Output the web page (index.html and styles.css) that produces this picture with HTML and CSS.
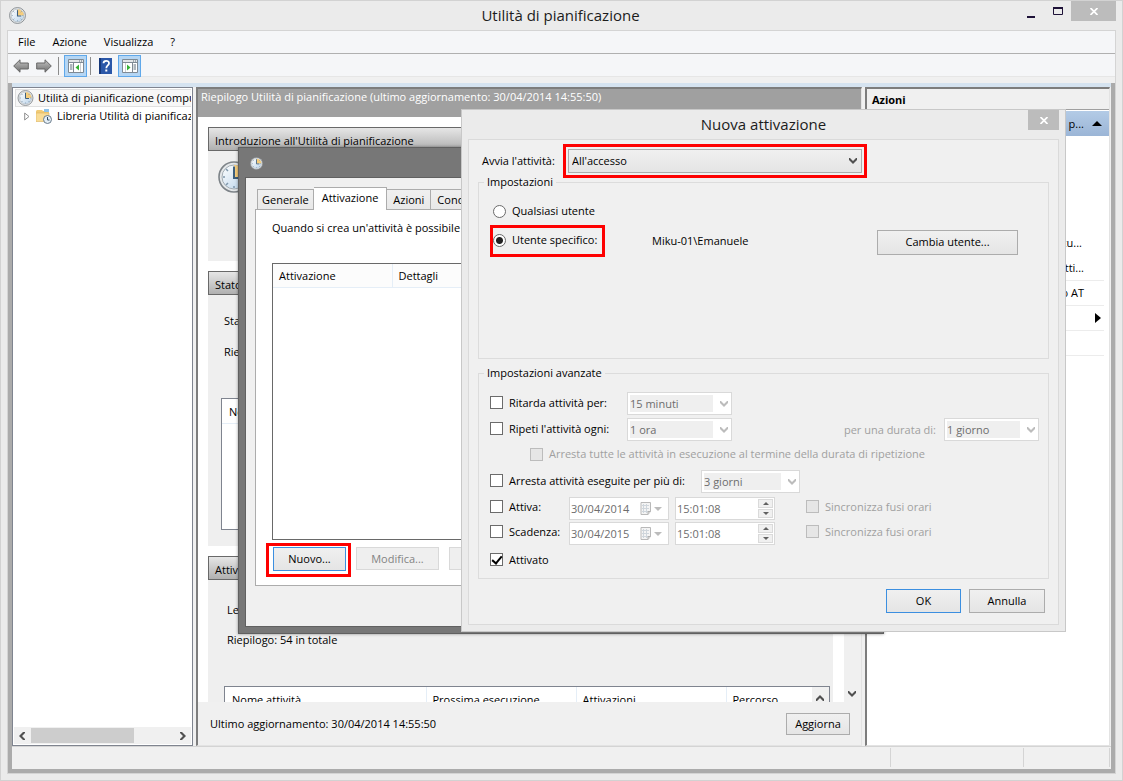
FILE: index.html
```html
<!DOCTYPE html>
<html lang="it">
<head>
<meta charset="utf-8">
<title>Utilità di pianificazione</title>
<link rel="stylesheet" href="styles.css">
</head>
<body>
<svg class="defs" aria-hidden="true">
  <defs>
    <linearGradient id="face" x1="0" y1="0" x2="1" y2="1"><stop offset="0" stop-color="#ffffff"/><stop offset="1" stop-color="#b9d3ea"/></linearGradient>
    <linearGradient id="arrow" x1="0" y1="0" x2="0" y2="1"><stop offset="0" stop-color="#c4c4c4"/><stop offset="1" stop-color="#6e6e6e"/></linearGradient>
    <symbol id="clock" viewBox="0 0 32 32">
      <circle cx="16" cy="16" r="15" fill="#e4e7e9" stroke="#7d8388" stroke-width="1.600"/>
      <circle cx="16" cy="16" r="12" fill="url(#face)" stroke="#a4adb4" stroke-width="1"/>
      <path d="M16 16V4a12 12 0 0 1 12 12z" fill="#f6cd7c"/>
      <path d="M16 5v2M16 25v2M5 16h2M25 16h2M8 8l2 2M8 24l2-2M24 24l-2-2M24 8l-2 2" stroke="#7f97ab" stroke-width="1.5"/>
      <path d="M16 6v11h7" fill="none" stroke="#3d5f7d" stroke-width="2"/>
    </symbol>
    <symbol id="chev-down" viewBox="0 0 8 6"><path d="M0 0h1l3 3 3-3h1v2L4 6 0 2z" fill="currentColor"/></symbol>
    <symbol id="chev-up" viewBox="0 0 8 6"><path d="M0 6h1l3-3 3 3h1V4L4 0 0 4z" fill="currentColor"/></symbol>
    <symbol id="chev-left" viewBox="0 0 6 8"><path d="M6 0v1L3 4l3 3v1H4L0 4l4-4z" fill="currentColor"/></symbol>
    <symbol id="chev-right" viewBox="0 0 6 8"><path d="M0 0v1l3 3-3 3v1h2l4-4-4-4z" fill="currentColor"/></symbol>
    <symbol id="tri-up" viewBox="0 0 8 4"><path d="M0 4l4-4 4 4z" fill="currentColor"/></symbol>
    <symbol id="tri-down" viewBox="0 0 8 4"><path d="M0 0l4 4 4-4z" fill="currentColor"/></symbol>
    <symbol id="cross" viewBox="0 0 8 7"><path d="M.5 0l7 7M7.500 0l-7 7" stroke="currentColor" stroke-width="1.700"/></symbol>
    <symbol id="calendar" viewBox="0 0 12 13">
      <path d="M1 .5h9.500v9l-2.500 3H1z" fill="#f4f4f4" stroke="#b9b9b9"/>
      <path d="M2 3.500h7M2 6.500h7M2 9.500h6M3.500 2v9M6.500 2v9" stroke="#cfd6dc" fill="none"/>
      <path d="M8 12.500v-3h2.500" fill="#ddd" stroke="#b0b0b0"/>
    </symbol>
  </defs>
</svg>

<div class="window">
  <header class="titlebar">
    <svg class="title-icon"><use href="#clock"/></svg>
    <h1 class="title">Utilità di pianificazione</h1>
    <div class="captions">
      <button class="cap" aria-label="Riduci a icona"><svg width="8" height="14"><rect y="12" width="8" height="2" fill="#1e1238"/></svg></button>
      <button class="cap" aria-label="Ingrandisci"><svg width="10" height="8"><path d="M.5 1v6.500h9V1" fill="none" stroke="#1e1238"/><rect width="10" height="2" fill="#1e1238"/></svg></button>
      <button class="cap close" aria-label="Chiudi"><svg width="8" height="7"><use href="#cross"/></svg></button>
    </div>
  </header>

  <div class="client">
    <nav class="menubar">
      <button>File</button><button>Azione</button><button>Visualizza</button><button>?</button>
    </nav>
    <div class="toolbar">
      <button class="tool" aria-label="Indietro"><svg width="16" height="14" viewBox="0 0 16 14"><path d="M.7 7L7 .8V4h8.300v6H7v3.200z" fill="url(#arrow)" stroke="#666"/></svg></button>
      <button class="tool" aria-label="Avanti"><svg width="16" height="14" viewBox="0 0 16 14"><path d="M15.300 7L9 .8V4H.7v6H9v3.200z" fill="url(#arrow)" stroke="#666"/></svg></button>
      <span class="tool-sep"></span>
      <button class="tool pressed" aria-label="Mostra albero console"><svg width="16" height="14" viewBox="0 0 16 14"><path d="M.5.5h15v13H.5z" fill="#fff" stroke="#7f8a94"/><path d="M1 1h14v2H1z" fill="#e3e6e8"/><path d="M1 3.500h14M5.500 4v9" stroke="#7f8a94"/><path d="M2 6h2.500M2 8h2.500M2 10h2.500M11 2h1M13 2h1" stroke="#5d6c7a"/><path d="M11 5.500v6L7.500 8.500z" fill="#35b233"/><path d="M12.500 4v9" stroke="#c9cdd0"/></svg></button>
      <span class="tool-sep"></span>
      <button class="tool" aria-label="Guida"><svg width="13" height="16" viewBox="0 0 13 16"><rect width="13" height="16" fill="#2b57a8"/><rect width="2" height="16" fill="#16387a"/><path d="M4.500 5.300C4.500 2 10 2 10 5.200 10 7.400 7.300 7.500 7.300 10.200" fill="none" stroke="#fff" stroke-width="1.800"/><rect x="6.300" y="11.500" width="2" height="2" fill="#fff"/></svg></button>
      <button class="tool pressed" aria-label="Mostra riquadro azioni"><svg width="16" height="14" viewBox="0 0 16 14"><path d="M.5.5h15v13H.5z" fill="#fff" stroke="#7f8a94"/><path d="M1 1h14v2H1z" fill="#e3e6e8"/><path d="M1 3.500h14M10.500 4v9" stroke="#7f8a94"/><path d="M11.500 6H14M11.500 8H14M11.500 10H14M11 2h1M13 2h1" stroke="#5d6c7a"/><path d="M5 5.500v6l3.500-3z" fill="#35b233"/><path d="M3.500 4v9" stroke="#c9cdd0"/></svg></button>
    </div>

    <main class="console">
      <aside class="tree">
        <ul class="nodes">
          <li class="node root"><svg class="node-icon"><use href="#clock"/></svg><span>Utilità di pianificazione (computer locale)</span></li>
          <li class="node child">
            <svg width="6" height="9" viewBox="0 0 6 9"><path d="M.7 1v7L5 4.500z" fill="#fff" stroke="#8f8f8f"/></svg>
            <svg class="node-icon folder" viewBox="0 0 16 16"><path d="M0 3l1-1h5l1 1h6v10H0z" fill="#f1cb77"/><path d="M8 1h5v3H8z" fill="#8fc3ea"/><path d="M0 5h13v8.500H0z" fill="#f9dc96" stroke="#dcb35a" stroke-width=".6"/><circle cx="11.500" cy="11.500" r="4" fill="#e6eff6" stroke="#6b7d8c"/><path d="M11.500 9v3h2" fill="none" stroke="#2f4d68"/></svg>
            <span>Libreria Utilità di pianificazione</span>
          </li>
        </ul>
        <div class="hscroll">
          <svg width="6" height="8"><use href="#chev-left"/></svg>
          <span class="track"><span class="thumb"></span></span>
          <svg width="6" height="8"><use href="#chev-right"/></svg>
        </div>
      </aside>

      <section class="center">
        <h2 class="center-head">Riepilogo Utilità di pianificazione (ultimo aggiornamento: 30/04/2014 14:55:50)</h2>
        <div class="scroller">
          <div class="groups">
            <section class="group intro">
              <h3>Introduzione all'Utilità di pianificazione</h3>
              <div class="group-body"><svg class="big-clock"><use href="#clock"/></svg></div>
            </section>
            <section class="group status">
              <h3>Stato attività</h3>
              <div class="group-body">
                <p>Stato attività</p>
                <p>Riepilogo</p>
                <div class="mini-list"><span class="mini-head">Nome</span></div>
              </div>
            </section>
            <section class="group active">
              <h3>Attività attive</h3>
              <div class="group-body">
                <p>Le attività</p>
                <p>Riepilogo: 54 in totale</p>
                <div class="table-box">
                  <table class="task-table">
                    <thead><tr><th>Nome attività</th><th>Prossima esecuzione</th><th>Attivazioni</th><th>Percorso</th></tr></thead>
                  </table>
                  <span class="up-btn"><svg width="8" height="6"><use href="#chev-up"/></svg></span>
                </div>
              </div>
            </section>
          </div>
          <div class="vscroll"><svg width="8" height="6"><use href="#chev-down"/></svg></div>
        </div>
        <footer class="center-foot">
          <span>Ultimo aggiornamento: 30/04/2014 14:55:50</span>
          <button class="btn refresh">Aggiorna</button>
        </footer>
      </section>

      <aside class="actions">
        <h2 class="actions-head">Azioni</h2>
        <div class="actions-sub"><span>Utilità di p...</span><svg width="10" height="5"><use href="#tri-up"/></svg></div>
        <ul class="action-list">
          <li class="plain">esecu...</li>
          <li>atti...</li>
          <li>servizio AT</li>
          <li class="more"><svg width="6" height="10" viewBox="0 0 6 10"><path d="M0 0l6 5-6 5z"/></svg></li>
          <li></li>
        </ul>
      </aside>
    </main>
    <footer class="statusbar"><span></span><span></span><span></span></footer>
  </div>
</div>

<section class="dialog task-dialog">
  <header class="task-title"><svg class="small-icon"><use href="#clock"/></svg></header>
  <div class="task-client">
    <div class="tabs" role="tablist">
      <button role="tab">Generale</button><button role="tab" class="current">Attivazione</button><button role="tab">Azioni</button><button role="tab">Condizioni</button>
    </div>
    <div class="tab-page">
      <p class="hint">Quando si crea un'attività è possibile</p>
      <div class="list">
        <table><thead><tr><th>Attivazione</th><th>Dettagli</th></tr></thead></table>
      </div>
      <div class="list-buttons">
        <span class="mark"><button class="btn primary">Nuovo...</button></span>
        <button class="btn modify" disabled>Modifica...</button>
        <button class="btn modify" disabled aria-label="Elimina"></button>
      </div>
    </div>
  </div>
</section>

<section class="dialog trigger-dialog">
  <header class="trigger-title">
    <h2>Nuova attivazione</h2>
    <button class="cap close" aria-label="Chiudi"><svg width="8" height="7"><use href="#cross"/></svg></button>
  </header>
  <form class="trigger-client">
    <div class="begin-row">
      <label for="begin">Avvia l'attività:</label>
      <span class="mark"><span class="combo main"><select id="begin"><option>All'accesso</option></select><svg width="8" height="6"><use href="#chev-down"/></svg></span></span>
    </div>

    <fieldset class="box settings">
      <legend>Impostazioni</legend>
      <label class="choice any"><input type="radio" name="who"><span>Qualsiasi utente</span></label>
      <div class="user-row">
        <span class="mark who"><label class="choice"><input type="radio" name="who" checked><span>Utente specifico:</span></label></span>
        <span class="user">Miku-01\Emanuele</span>
        <button type="button" class="btn change">Cambia utente...</button>
      </div>
    </fieldset>

    <fieldset class="box advanced">
      <legend>Impostazioni avanzate</legend>
      <div class="row">
        <label class="choice wide"><input type="checkbox"><span>Ritarda attività per:</span></label>
        <span class="combo off w-delay"><select disabled aria-label="Ritardo"><option>15 minuti</option></select><svg width="8" height="6"><use href="#chev-down"/></svg></span>
      </div>
      <div class="row repeat">
        <label class="choice wide"><input type="checkbox"><span>Ripeti l'attività ogni:</span></label>
        <span class="combo off w-delay"><select disabled aria-label="Intervallo"><option>1 ora</option></select><svg width="8" height="6"><use href="#chev-down"/></svg></span>
        <label class="faded push" for="dur">per una durata di:</label>
        <span class="combo off w-dur"><select id="dur" disabled><option>1 giorno</option></select><svg width="8" height="6"><use href="#chev-down"/></svg></span>
      </div>
      <div class="row sub">
        <label class="choice faded"><input type="checkbox" disabled><span>Arresta tutte le attività in esecuzione al termine della durata di ripetizione</span></label>
      </div>
      <div class="row stop">
        <label class="choice stop-label"><input type="checkbox"><span>Arresta attività eseguite per più di:</span></label>
        <span class="combo off w-stop"><select disabled aria-label="Durata massima"><option>3 giorni</option></select><svg width="8" height="6"><use href="#chev-down"/></svg></span>
      </div>
      <div class="row start">
        <label class="choice short"><input type="checkbox"><span>Attiva:</span></label>
        <span class="field"><input type="text" value="30/04/2014" disabled aria-label="Data di attivazione"><svg width="12" height="13"><use href="#calendar"/></svg><svg class="tri" width="8" height="4"><use href="#tri-down"/></svg></span>
        <span class="field"><input type="text" value="15:01:08" disabled aria-label="Ora di attivazione"><span class="spin"><i><svg width="6" height="3"><use href="#tri-up"/></svg></i><i><svg width="6" height="3"><use href="#tri-down"/></svg></i></span></span>
        <label class="choice faded sync"><input type="checkbox" disabled><span>Sincronizza fusi orari</span></label>
      </div>
      <div class="row end">
        <label class="choice short"><input type="checkbox"><span>Scadenza:</span></label>
        <span class="field"><input type="text" value="30/04/2015" disabled aria-label="Data di scadenza"><svg width="12" height="13"><use href="#calendar"/></svg><svg class="tri" width="8" height="4"><use href="#tri-down"/></svg></span>
        <span class="field"><input type="text" value="15:01:08" disabled aria-label="Ora di scadenza"><span class="spin"><i><svg width="6" height="3"><use href="#tri-up"/></svg></i><i><svg width="6" height="3"><use href="#tri-down"/></svg></i></span></span>
        <label class="choice faded sync"><input type="checkbox" disabled><span>Sincronizza fusi orari</span></label>
      </div>
      <div class="row enabled">
        <label class="choice"><input type="checkbox" checked><span>Attivato</span></label>
      </div>
    </fieldset>

    <div class="confirm">
      <button type="button" class="btn primary">OK</button>
      <button type="button" class="btn">Annulla</button>
    </div>
  </form>
</section>
</body>
</html>
```
FILE: styles.css
```css
* { box-sizing: border-box; }
body, h1, h2, h3, p, ul, fieldset { margin: 0; padding: 0; }
body {
  font: 11px/16px "Open Sans", "Noto Sans", sans-serif;
  color: #000;
  background: #ebebeb;
  position: relative;
}
ul { list-style: none; }
h1, h2, h3, th { font-weight: 400; font-size: inherit; text-align: left; }
button, input, select { font: inherit; color: inherit; margin: 0; padding: 0; }
button { border: 0; background: none; }
svg { display: block; flex: none; }
.defs { position: absolute; width: 0; height: 0; }

/* main window */
.window {
  height: 100vh;
  border: 1px solid #d2d2d2;
  padding: 0 6px 6px;
  display: flex;
  flex-direction: column;
  overflow: hidden;
}
.titlebar { display: flex; height: 29px; align-items: center; flex: none; }
.title-icon { width: 17px; height: 17px; margin-left: 2px; }
.title { flex: 1; text-align: center; font-size: 15px; line-height: 20px; padding: 0 0 2px 78px; color: #1c1c1c; }
.captions { display: flex; align-self: flex-start; }
.cap { width: 27px; height: 20px; display: flex; align-items: center; justify-content: center; }
.captions .close { width: 45px; }
.close { background: #bcbcbc; color: #fff; }
.client {
  flex: 1;
  min-height: 0;
  display: flex;
  flex-direction: column;
  border: 1px solid #d4d4d4;
  background: #f0f0f0;
}
.menubar { height: 23px; display: flex; gap: 17px; padding-left: 10px; background: #f5f6f8; border-bottom: 1px solid #b0b0b0; flex: none; }
.toolbar { height: 23px; display: flex; align-items: center; padding: 1px 0 0 1px; background: #f5f6f8; border-bottom: 1px solid #e6e6e6; flex: none; }
.tool { width: 23px; height: 22px; display: flex; align-items: center; justify-content: center; }
.pressed { background: #b5d6f4; border: 1px solid #5fa8ea; }
.tool-sep { width: 1px; height: 18px; background: #8c8c8c; margin: 0 2px 0 3px; }
.tool-sep + .pressed { margin-left: 3px; }
.tool + .pressed { margin-left: 1px; }
.tool-sep + .tool:not(.pressed) { margin-left: 1px; }

.console {
  flex: 1;
  min-height: 0;
  margin-top: 6px;
  padding: 4px 1px 0 0;
  display: flex;
  gap: 3px;
  background: linear-gradient(#d5e3f0 4px, #f0f0f0 4px);
  border: solid #ababab;
  border-width: 0 4px;
}
.tree { width: 181px; flex: none; display: flex; flex-direction: column; background: #fff; border: 1px solid #7f848f; padding: 1px; overflow: hidden; }
.nodes { flex: 1; overflow: hidden; }
.node { display: flex; align-items: center; white-space: nowrap; height: 18px; overflow: hidden; }
.node span { flex: 1; min-width: 0; overflow: hidden; }
.root { gap: 4px; padding-left: 1px; border: 1px solid #e0e0e0; border-right: 0; background: #f7f7f7; margin-left: 1px; }
.child { gap: 5px; padding-left: 10px; }
.node-icon { width: 16px; height: 16px; }
.root .node-icon { width: 17px; }
.child .node-icon { margin-left: 1px; }
.hscroll { display: flex; align-items: center; height: 17px; padding: 0 5px; gap: 6px; background: #f0f0f0; color: #505050; flex: none; }
.track { flex: 1; }
.thumb { display: block; width: 72%; height: 15px; background: #cdcdcd; }

.center { flex: 1; min-width: 0; display: flex; flex-direction: column; border: 1px solid #e3e3e3; border-width: 2px 1px 1px 2px; border-top-color: #7d7d7d; border-left-color: #7d7d7d; }
.center-head { height: 28px; padding-left: 3px; background: #a0a0a0; color: #fff; flex: none; white-space: nowrap; overflow: hidden; }
.scroller { flex: 1; min-height: 0; display: flex; background: #fff; overflow: hidden; }
.groups { flex: 1; padding: 10px 11px 0 10px; min-width: 0; }
.group { background: #efefef; margin-bottom: 10px; }
.group h3 { height: 24px; padding: 5px 0 0 6px; border: 1px solid #696969; background: linear-gradient(#e6e6e6, #b0b0b0); }
.intro { height: 134px; }
.group-body { display: flex; flex-direction: column; }
.big-clock { width: 32px; height: 32px; margin: 10px 0 0 10px; }
.status { height: 275px; }
.status .group-body { padding: 18px 12px 0 13px; }
.status p { margin: 0 0 15px 3px; }
.mini-list { height: 132px; margin-top: 23px; border: 1px solid #7f848f; background: #fff; }
.mini-head { display: block; height: 25px; padding: 5px 7px; border-bottom: 1px solid #e5eef7; }
.active { height: 146px; margin-bottom: 0; }
.active .group-body { padding: 22px 3px 0 16px; }
.active p { margin: 0 0 14px 3px; }
.table-box { display: flex; height: 40px; margin-top: 24px; border: 1px solid #7f848f; background: #fff; }
.task-table { flex: 1; border-collapse: collapse; table-layout: fixed; height: 24px; }
.task-table th { width: 150px; padding: 2px 0 0 6px; border-right: 1px solid #e5eef7; white-space: nowrap; }
.task-table th:first-child { width: 201px; padding-left: 7px; }
.task-table th:last-child { width: auto; border: 0; }
.up-btn { width: 17px; background: #f0f0f0; color: #505050; padding: 8px 4px; }
.vscroll { width: 17px; background: #f0f0f0; color: #505050; display: flex; align-items: flex-end; padding: 0 4px 5px; }
.center-foot { height: 43px; display: flex; align-items: center; justify-content: space-between; padding: 0 11px 0 12px; background: #f0f0f0; flex: none; }

.btn { height: 23px; border: 1px solid #acacac; background: linear-gradient(#f0f0f0, #e5e5e5); text-align: center; }
.btn:disabled { border-color: #d9d9d9; background: #efefef; color: #838383; }
.primary { border-color: #3c8fe0; }
.refresh { width: 64px; height: 22px; }

.actions { width: 245px; flex: none; background: #fff; border: 1px solid #e3e3e3; border-width: 2px 1px 1px 2px; border-top-color: #7d7d7d; border-left-color: #7d7d7d; }
.actions-head { height: 21px; padding: 3px 0 0 5px; font-weight: 700; background: #f0f0f0; border-bottom: 1px solid #a0a0a0; }
.actions-sub { height: 25px; margin-top: 1px; display: flex; align-items: center; justify-content: flex-end; gap: 8px; padding-right: 7px; background: linear-gradient(#b3cbe6, #9bb5d6); }
.action-list { padding: 95px 5px 0 3px; text-align: right; }
.action-list li { height: 25px; padding: 4px 20px 0 0; border-bottom: 1px solid #ececec; }
.action-list .plain { border-color: transparent; padding-right: 22px; }
.action-list .more { display: flex; justify-content: flex-end; padding: 7px 3px 0 0; }

.statusbar { display: flex; border: solid #ababab; border-width: 0 4px 4px; flex: none; height: 27px; background: #f0f0f0; box-shadow: inset 0 1px #d4d4d4; padding: 2px 1px 2px 0; }
.statusbar span { border-right: 1px solid #d4d4d4; width: 133px; }
.statusbar span:first-child { flex: 1; }
.statusbar span:last-child { width: 86px; }

/* dialogs float over the main window */
.dialog { position: absolute; display: flex; flex-direction: column; }
.mark { display: inline-flex; border: 3px solid #fe0000; }

.task-dialog { left: 238px; top: 147px; width: 646px; height: 487px; background: #777; border: 1px solid #606060; padding: 0 6px 6px; box-shadow: 0 0 3px rgba(0, 0, 0, .4); }
.task-title { height: 29px; padding: 9px 0 0 5px; }
.small-icon { width: 13px; height: 13px; }
.task-client { flex: 1; background: #f0f0f0; border: 1px solid #606060; padding: 8px 9px 40px; display: flex; flex-direction: column; }
.tabs { display: flex; align-items: flex-end; padding-left: 2px; height: 23px; }
.tabs button { height: 20px; padding: 0 6px; border: 1px solid #acacac; border-width: 1px 1px 0 0; background: linear-gradient(#f0f0f0, #e8e8e8); }
.tabs button:first-child { border-left-width: 1px; padding: 0 4px; }
.tabs .current { height: 23px; background: #fff; padding: 0 8px 3px; margin-bottom: -1px; position: relative; }
.tab-page { flex: 1; border: 1px solid #acacac; background: #fff; padding: 10px 16px 8px; display: flex; flex-direction: column; }
.list { flex: 1; margin-top: 27px; border: 1px solid #696969; }
.list table { border-collapse: collapse; table-layout: fixed; width: 100%; }
.list th { height: 23px; padding: 2px 6px 0; border-bottom: 1px solid #e5eef7; border-right: 1px solid #e5eef7; background: #fcfcfc; }
.list th:first-child { width: 119px; }
.list-buttons { display: flex; align-items: flex-start; gap: 10px; margin: 3px 0 0 -6px; }
.list-buttons .mark { padding: 1px 2px 3px 4px; margin-right: -5px; width: 85px; }
.list-buttons .primary { width: 73px; height: 24px; }
.modify { width: 83px; margin-top: 4px; }

.trigger-dialog { left: 461px; top: 109px; width: 605px; height: 523px; background: #ebebeb; border: 1px solid #c8c8c8; padding: 0 6px 6px; }
.trigger-title { display: flex; height: 29px; }
.trigger-title h2 { flex: 1; text-align: center; font-size: 15px; line-height: 28px; padding-left: 31px; color: #1c1c1c; }
.trigger-title .close { width: 31px; }
.trigger-client { flex: 1; background: #f0f0f0; border: 1px solid #dadada; padding: 4px 9px; }
.begin-row { display: flex; align-items: center; padding-left: 4px; }
.begin-row label { width: 81px; white-space: nowrap; }
.begin-row .mark { padding: 2px; width: 304px; }
.combo { position: relative; display: inline-block; height: 23px; }
.combo select { appearance: none; display: block; width: 100%; height: 100%; border: 1px solid #acacac; border-radius: 0; background: linear-gradient(#f0f0f0, #e5e5e5); padding: 0 3px; }
.combo svg { position: absolute; right: 5px; top: 9px; color: #505050; pointer-events: none; }
.main { width: 100%; height: 24px; }
.off select { border-color: #d9d9d9; color: #6d6d6d; opacity: 1; padding: 0 2px; background: linear-gradient(#efefef, #efefef) 2px 2px / calc(100% - 20px) 17px no-repeat #fff; }
.off svg { color: #bcbcbc; right: 4px; }
.w-delay { width: 105px; }
.w-dur { width: 95px; }
.w-stop { width: 99px; }

.box { border: 1px solid #dcdcdc; min-width: 0; }
.box legend { margin-left: -6px; padding: 0 3px; line-height: 16px; }
.settings { height: 185px; margin-top: -4px; padding: 12px 30px 0 11px; }
.choice { display: flex; align-items: center; gap: 6px; white-space: nowrap; }
.any { padding-left: 3px; height: 18px; }
input[type="radio"], input[type="checkbox"] { appearance: none; width: 13px; height: 13px; border: 1px solid #6b6b6b; background: #fff; flex: none; }
input[type="radio"] { border-radius: 50%; }
input[type="radio"]:checked { background: radial-gradient(circle, #222 3px, #fff 4px); }
input[type="checkbox"]:disabled { border-color: #bcbcbc; background: #e6e6e6; }
input[type="checkbox"]:checked { position: relative; }
input[type="checkbox"]:checked::after { content: ""; position: absolute; left: 3px; top: 0; width: 4px; height: 8px; border: solid #000; border-width: 0 2px 2px 0; transform: rotate(40deg); }
.user-row { display: flex; align-items: center; margin-top: 5px; }
.who { width: 115px; height: 32px; }
.who .choice { padding-bottom: 2px; }
.user { margin-left: 47px; flex: 1; }
.change { width: 141px; height: 25px; margin-top: 2px; }

.advanced { height: 214px; margin-top: 6px; padding: 11px 9px 0 11px; }
.row { display: flex; align-items: center; height: 23px; }
.row .choice { padding-bottom: 2px; }
.wide { width: 137px; }
.repeat { margin-top: 3px; }
.push { margin-left: auto; margin-right: 8px; }
.faded { color: #a0a0a0; }
.sub { height: 28px; padding-left: 40px; }
.stop { margin-top: 1px; }
.stop-label { width: 211px; }
.start { margin-top: 4px; }
.end { margin-top: 2px; }
.start .choice, .end .choice, .enabled .choice { padding-bottom: 4px; }
.short { width: 79px; }
.field { display: flex; align-items: center; width: 100px; height: 23px; padding: 0 1px; margin-right: 6px; border: 1px solid #d9d9d9; background: #fff; color: #bcbcbc; }
.field input { flex: 1; width: 0; min-width: 0; border: 0; background: none; color: #6d6d6d; white-space: nowrap; }
.field .tri { margin: 0 5px 0 2px; }
.spin { display: flex; flex-direction: column; gap: 1px; color: #606060; }
.spin i { width: 15px; height: 9px; border: 1px solid #dadada; background: #f0f0f0; display: flex; align-items: center; justify-content: center; }
.sync { margin-left: 25px; }
.enabled { margin-top: 5px; }
.confirm { display: flex; justify-content: flex-end; gap: 8px; padding: 10px 4px 0 0; }
.confirm .btn { width: 76px; height: 24px; }
.confirm .primary { width: 75px; }
```
